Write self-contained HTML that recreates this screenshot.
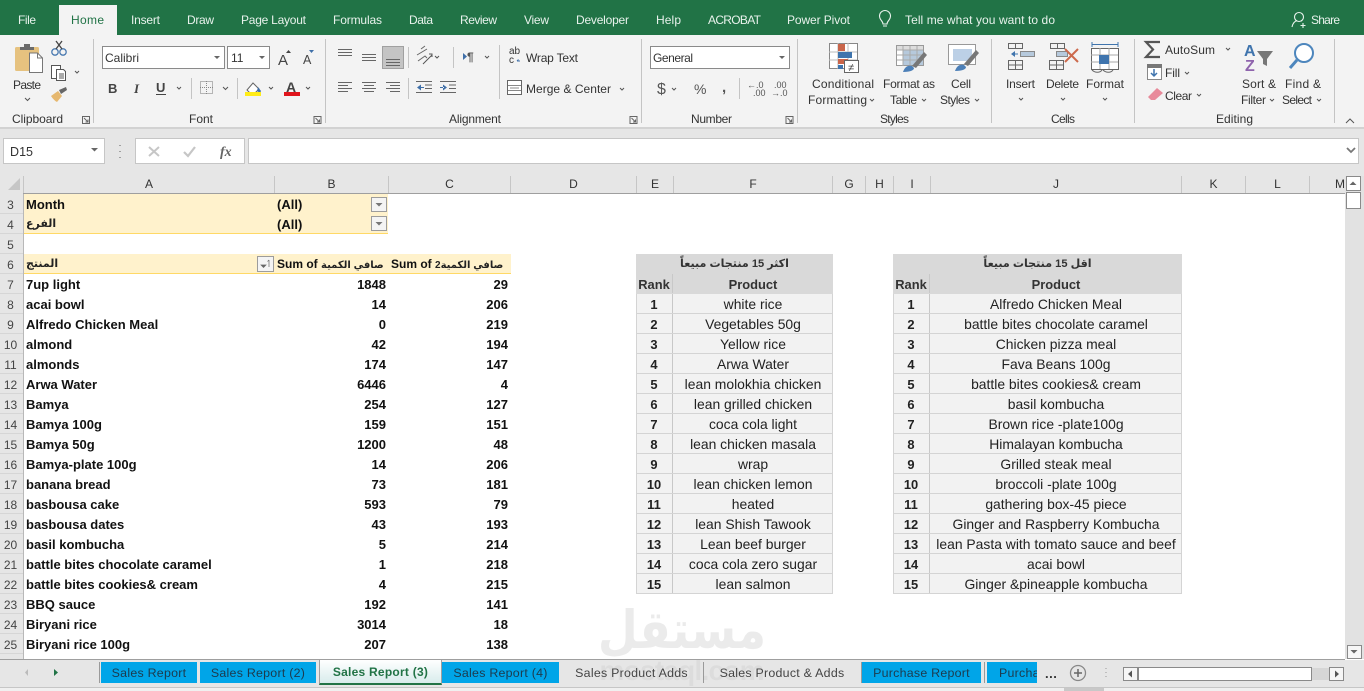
<!DOCTYPE html>
<html lang="en"><head><meta charset="utf-8"><title>Sales Report</title>
<style>
html,body{margin:0;padding:0;background:#fff}
#p{position:relative;width:1364px;height:691px;overflow:hidden;background:#fff;font-family:"Liberation Sans","DejaVu Sans",sans-serif}
svg{position:absolute;left:0;top:0}
svg text{font-family:"Liberation Sans","DejaVu Sans",sans-serif;font-size:12px;fill:#333}
.t text{fill:#e8f2ec;font-size:12px}
.a{position:absolute}
.ch{position:absolute;top:176px;height:17px;line-height:16px;text-align:center;font-size:12px;color:#333;border-right:1px solid #c6c6c6;box-sizing:border-box;overflow:hidden}
#rh{position:absolute;left:0;top:194px;width:24px;background:#e6e6e6;height:465px;border-right:1px solid #b8b8b8;box-sizing:border-box;overflow:hidden}
#rh div{height:20px;line-height:22px;font-size:12px;color:#444;text-align:center;box-sizing:border-box;border-bottom:1px solid #d6d6d6;padding-right:2px}
#pv{position:absolute;left:24px;top:194px;width:487px}
.r{position:relative;height:20px;line-height:21px;font-size:13px;font-weight:bold;color:#111;white-space:nowrap}
.r>span{position:absolute;top:0}
.r .n{left:2px}.r .b{right:125px}.r .c{right:3px}
.ar{font-size:10px;color:#222}
.y{background:#fff2cc}
.yb{box-shadow:inset 0 -1px 0 #ffd966}
.tb{position:absolute;top:254px;font-size:12.9px;color:#222;text-align:center}
.tb div{height:20px;line-height:21px;box-sizing:border-box;white-space:nowrap}
.tb .h{background:#d9d9d9;font-weight:bold;color:#333;font-size:11.1px}
.tb .row{display:flex;background:#f2f2f2;border-bottom:1px solid #d4d4d4;box-shadow:inset 1px 0 0 #d4d4d4,inset -1px 0 0 #d4d4d4}
.tb .hr{display:flex;background:#d9d9d9;font-weight:bold;color:#333}
.tb .rk{width:37px;border-right:1px solid #c8c8c8;flex:none;box-sizing:border-box}
.tb .row .rk{font-weight:bold}
.tb .row .pd{font-size:13.9px}
.tb .row div,.tb .hr div{height:19px}
.tb .pd{flex:1}
.s{position:absolute;top:662px;height:21px;line-height:22px;text-align:center;font-size:12.4px;letter-spacing:.25px;color:#1d3a4d;overflow:hidden;white-space:nowrap}
.bl{background:#00a5e8}
.sp{position:absolute;top:662px;width:1px;height:21px;background:#9a9a9a}
</style></head><body><div id="p">

<svg width="1364" height="691" viewBox="0 0 1364 691">
<rect width="1364" height="35" fill="#217346"/>
<rect y="35" width="1364" height="92" fill="#f3f3f3"/>
<rect y="127" width="1364" height="2" fill="#d2d2d2"/>
<rect y="129" width="1364" height="47" fill="#e6e6e6"/>
<rect x="59" y="5" width="58" height="31" fill="#f3f3f3"/>
<g class="t">
<text x="18" y="24" textLength="18">File</text>
<text x="71" y="24" textLength="33" style="fill:#217346">Home</text>
<text x="131" y="24" textLength="29">Insert</text>
<text x="187" y="24" textLength="27">Draw</text>
<text x="241" y="24" textLength="65">Page Layout</text>
<text x="333" y="24" textLength="49">Formulas</text>
<text x="409" y="24" textLength="24">Data</text>
<text x="460" y="24" textLength="37">Review</text>
<text x="524" y="24" textLength="25">View</text>
<text x="576" y="24" textLength="53">Developer</text>
<text x="656" y="24" textLength="25">Help</text>
<text x="708" y="24" textLength="53">ACROBAT</text>
<text x="787" y="24" textLength="63">Power Pivot</text>
<text x="905" y="24" textLength="150">Tell me what you want to do</text>
<text x="1311" y="24" textLength="29">Share</text>
</g>
<g fill="none" stroke="#e8f2ec" stroke-width="1.1">
<path d="M883 24c0-3-3.500-4-3.500-8a5.500 5.500 0 0 1 11 0c0 4-3.500 5-3.500 8zM883 26h4"/>
<circle cx="1299" cy="17" r="4.500"/><path d="M1292 27c1-5 3.500-6 5-6.500M1301 20.500l1 .5"/><path d="M1303 23v5M1300.500 25.500h5"/>
</g>
<g fill="#c4c4c4">
<rect x="93" y="39" width="1" height="84"/><rect x="325" y="39" width="1" height="84"/><rect x="641" y="39" width="1" height="84"/><rect x="797" y="39" width="1" height="84"/><rect x="991" y="39" width="1" height="84"/><rect x="1134" y="39" width="1" height="84"/><rect x="1334" y="39" width="1" height="84"/>
<rect x="191" y="78" width="1" height="21"/><rect x="237" y="78" width="1" height="21"/><rect x="408" y="47" width="1" height="21"/><rect x="408" y="78" width="1" height="21"/><rect x="453" y="47" width="1" height="21"/><rect x="499" y="45" width="1" height="54"/><rect x="739" y="78" width="1" height="21"/>
</g>
<rect x="15" y="47" width="24" height="24" rx="1.500" fill="#e6c27f"/>
<path d="M20 47h4v-3h6v3h4v3H20z" fill="#6b6b6b"/>
<path d="M29.500 53h8l5 5v14.500h-13z" fill="#fff" stroke="#777"/>
<path d="M37.500 53v5h5" fill="none" stroke="#777"/>
<text x="13" y="89" textLength="28">Paste</text>
<path d="M25 98l2.500 2.500 2.500-2.500M75 71l2 2 2-2M177 87l2 2 2-2M223 87l2.500 2.500 2.500-2.500" fill="none" stroke="#555"/>
<g fill="none" stroke-width="1.300"><circle cx="55" cy="52" r="3.200" stroke="#4a7ab0"/><circle cx="63" cy="52" r="3.200" stroke="#4a7ab0"/><path d="M56 49l6-8M62 49l-6-8" stroke="#444"/></g>
<g fill="#fff" stroke="#555"><path d="M51.500 65.500h9v13h-9z"/><path d="M56.500 69.500h7l2 2v9h-9z"/><path d="M59 74h5M59 76h5M59 78h5" fill="none"/></g>
<path d="M51 96l7-5 4 5-5 6c-2-1-4-3-6-6z" fill="#e6b86f"/><path d="M59 90l7-3 1 3-6 4z" fill="#666"/>
<text x="12" y="123" textLength="51">Clipboard</text>
<text x="189" y="123" textLength="24">Font</text>
<text x="449" y="123" textLength="52">Alignment</text>
<text x="691" y="123" textLength="41">Number</text>
<text x="880" y="123" textLength="29">Styles</text>
<text x="1051" y="123" textLength="24">Cells</text>
<text x="1216" y="123" textLength="37">Editing</text>
<g fill="none" stroke="#666"><path d="M82.500 116.500h7v7h-7zM84 118l4 4M88 119.500V122h-2.500"/><path d="M314 116.500h7v7h-7zM315.500 118l4 4M319.500 119.500V122H317"/><path d="M630 116.500h7v7h-7zM631.500 118l4 4M635.500 119.500V122H633"/><path d="M786 116.500h7v7h-7zM787.500 118l4 4M791.500 119.500V122H789"/><path d="M1346 123l4-4 4 4" stroke="#555"/></g>
<rect x="102.500" y="46.500" width="122" height="22" fill="#fff" stroke="#8a8a8a"/>
<rect x="227.500" y="46.500" width="42" height="22" fill="#fff" stroke="#8a8a8a"/>
<text x="105" y="62" textLength="34">Calibri</text><text x="231" y="62">11</text>
<path d="M214 56h6l-3 3zM259 56h6l-3 3z" fill="#666"/>
<text x="278" y="65" style="font-size:15px;fill:#444">A</text><text x="303" y="64" style="font-size:12.500px;fill:#444">A</text>
<path d="M286 53l2.500-3 2.500 3z" fill="#444"/><path d="M309 50h5l-2.500 3z" fill="#3f6fa8"/>
<text x="108" y="93" style="font-weight:bold;fill:#444;font-size:13px">B</text><text x="134" y="93" style="font-style:italic;font-family:'Liberation Serif';font-weight:bold;fill:#444;font-size:13px">I</text>
<text x="156" y="92" style="font-weight:bold;fill:#444;font-size:13px">U</text><rect x="156" y="94" width="10" height="1" fill="#444"/>
<rect x="200.500" y="81.500" width="12" height="12" fill="none" stroke="#777" stroke-dasharray="1 1"/><path d="M206.500 81v13M200 87.500h13" stroke="#888" stroke-dasharray="1 1"/>
<path d="M247 90l6-7 6 6-5 5h-3z" fill="#fff" stroke="#666"/><path d="M258 87l3 4-1 2-3-2z" fill="#3f6fa8"/><rect x="245" y="92" width="16" height="4" fill="#ffec17"/>
<path d="M269 87l2 2 2-2M306 87l2 2 2-2" fill="none" stroke="#555"/>
<text x="286" y="92" style="font-size:14px;fill:#444;font-weight:bold">A</text><rect x="284" y="92" width="16" height="4" fill="#e0141c"/>
<rect x="382.500" y="46.500" width="21" height="22" fill="#c4c4c4" stroke="#a0a0a0"/>
<g stroke="#666" fill="none">
<path d="M338 49.500h14M338 52.500h14M338 55.500h14"/><path d="M362 54.500h14M362 57.500h14M362 60.500h14"/><path d="M386 59.500h14M386 62.500h14M386 65.500h14"/>
<path d="M338 82.500h14M338 85.500h10M338 88.500h14M338 91.500h10"/><path d="M362 82.500h14M364 85.500h10M362 88.500h14M364 91.500h10"/><path d="M386 82.500h14M390 85.500h10M386 88.500h14M390 91.500h10"/>
<path d="M425 85h7M425 88.500h7M416 92.500h16M416 81.500h16"/><path d="M449 85h7M449 88.500h7M440 92.500h16M440 81.500h16"/>
<path d="M417 55l10-6M418 61l7-5 2 2M421 49l4-3"/><path d="M423 64l9-9M429 54h3v3" stroke="#555"/>
<path d="M435 56l2 2 2-2M485 56l2 2 2-2M620 88l2 2 2-2M672 88l2 2 2-2" stroke="#555"/>
</g>
<path d="M417 87.500l4-3v6zM421 87h3v1h-3z" fill="#3f6fa8"/><path d="M447 87.500l-4-3v6zM440 87h4v1h-4z" fill="#3f6fa8"/>
<path d="M463 53l4 3.500-4 3.500z" fill="#3f6fa8"/><text x="467" y="61" style="font-size:12px;fill:#555;font-weight:bold">¶</text>
<text x="509" y="54" style="font-size:10px">ab</text><text x="509" y="63" style="font-size:10px">c</text><path d="M517 61h3M517 61l1.500-1.500" stroke="#3f6fa8" fill="none"/>
<text x="526" y="62" textLength="52">Wrap Text</text>
<rect x="507.500" y="80.500" width="14" height="14" fill="#fff" stroke="#666"/><path d="M508 85.500h13M508 90.500h13M510 88h9" stroke="#888"/>
<text x="526" y="93" textLength="85">Merge &amp; Center</text>
<rect x="650.500" y="46.500" width="139" height="22" fill="#fff" stroke="#8a8a8a"/><text x="653" y="62" textLength="40">General</text>
<path d="M779 56h6l-3 3z" fill="#666"/>
<text x="657" y="94" style="font-size:16px;fill:#555">$</text>
<text x="694" y="94" style="font-size:14px;fill:#555">%</text><text x="722" y="92" style="font-size:15px;fill:#555;font-weight:bold">,</text>
<text x="747" y="88" style="font-size:9px;fill:#555">←.0</text><text x="753" y="96" style="font-size:9px;fill:#555">.00</text>
<text x="774" y="88" style="font-size:9px;fill:#555">.00</text><text x="771" y="96" style="font-size:9px;fill:#555">→.0</text>
<g>
<rect x="829.500" y="43.500" width="28" height="25" fill="#fff" stroke="#888"/>
<path d="M829 52h28M829 60h28M838 43v26M848 43v26" stroke="#bbb"/>
<rect x="838" y="44" width="7" height="7" fill="#c9654a"/><rect x="838" y="52" width="14" height="6" fill="#3f74ad"/><rect x="838" y="59" width="10" height="5" fill="#c9654a"/><rect x="838" y="65" width="5" height="4" fill="#3f74ad"/>
<rect x="844.500" y="60.500" width="14" height="12" fill="#fff" stroke="#666"/><text x="848" y="71" style="font-size:11px;fill:#444">≠</text>
</g>
<text x="812" y="88" textLength="62">Conditional</text><text x="808" y="104" textLength="59">Formatting</text><path d="M870 99l2 2 2-2" fill="none" stroke="#555"/>
<g>
<rect x="896.500" y="45.500" width="27" height="20" fill="#fff" stroke="#999"/><rect x="903" y="50" width="20" height="15" fill="#b6c9dc"/><rect x="897" y="46" width="26" height="4" fill="#ddd"/>
<path d="M897 50h26M897 55h26M897 60h26M903 46v20M910 46v20M917 46v20" stroke="#aaa"/>
<path d="M912 66l12-14 3 3-11 13z" fill="#777"/><path d="M903 72c2-6 6-7 9-6l2 2c0 2-3 4-11 4z" fill="#4d80b8"/>
<rect x="948.500" y="44.500" width="27" height="20" fill="#fff" stroke="#999"/><rect x="953" y="49" width="19" height="12" fill="#bcd0e6"/>
<path d="M964 64l12-14 3 3-11 13z" fill="#777"/><path d="M955 71c2-6 6-7 9-6l2 2c0 2-3 4-11 4z" fill="#4d80b8"/>
</g>
<text x="883" y="88" textLength="52">Format as</text><text x="890" y="104" textLength="27">Table</text><path d="M922 99l2 2 2-2" fill="none" stroke="#555"/>
<text x="951" y="88" textLength="20">Cell</text><text x="940" y="104" textLength="30">Styles</text><path d="M975 99l2 2 2-2" fill="none" stroke="#555"/>
<g fill="none" stroke="#666">
<path d="M1008.500 43.500h14v5h-14zM1015.500 43.500v5"/><path d="M1008.500 60.500h14v9h-14zM1008.500 65h14M1015.500 60.500v9"/>
<rect x="1020.500" y="51.500" width="14" height="5" fill="#b6c9dc" stroke="#888"/>
<path d="M1050.500 43.500h14v5h-14zM1057.500 43.500v5M1049.500 60.500h14v9h-14zM1049.500 65h14M1056.500 60.500v9"/>
<rect x="1056.500" y="51.500" width="11" height="5" fill="#b6c9dc" stroke="#888"/>
<path d="M1065 49l13 13M1078 49l-13 13" stroke="#cc6a4d" stroke-width="2"/>
<rect x="1091.500" y="48.500" width="27" height="21" fill="#fff"/><path d="M1091 55h27M1091 62h27M1100 48v21M1109 48v21" stroke="#aaa"/>
<rect x="1099" y="55" width="10" height="9" fill="#3f74ad" stroke="none"/>
<path d="M1092 44.500h26M1092 42v5M1118 42v5" stroke="#3f74ad"/>
<path d="M1092 70c3 3 8 3 10 0M1103 70c3 3 8 3 10 0"/>
</g>
<path d="M1011 54l4-3v6zM1014 53.500h4v1h-4z" fill="#3f74ad"/>
<text x="1006" y="88" textLength="29">Insert</text><text x="1046" y="88" textLength="33">Delete</text><text x="1086" y="88" textLength="38">Format</text>
<path d="M1019 98l2 2 2-2M1061 98l2 2 2-2M1103 98l2 2 2-2" fill="none" stroke="#555"/>
<path d="M1160 42h-14l7 7.500-7 7.500h14" fill="none" stroke="#555" stroke-width="2.200"/>
<text x="1165" y="54" textLength="50">AutoSum</text><path d="M1226 48l2 2 2-2M1185 72l2 2 2-2M1197 94l2 2 2-2" fill="none" stroke="#555"/>
<rect x="1147.500" y="65.500" width="14" height="14" fill="#fff" stroke="#888"/><rect x="1147" y="64" width="15" height="4" fill="#777"/><path d="M1154 69v7M1151 73l3 3 3-3" stroke="#3f74ad" stroke-width="1.500" fill="none"/>
<text x="1165" y="77" textLength="15">Fill</text>
<path d="M1148 97l9-9 6 5-8 7h-4z" fill="#e88a9a"/>
<text x="1165" y="100" textLength="27">Clear</text>
<text x="1244" y="56" style="font-size:16px;font-weight:bold;fill:#3f74ad">A</text><text x="1245" y="71" style="font-size:16px;font-weight:bold;fill:#8f64ad">Z</text>
<path d="M1257 51h16l-6 8v7l-4-2v-5z" fill="#777"/>
<circle cx="1304" cy="53" r="9" fill="#fff" stroke="#4d86bd" stroke-width="2"/><path d="M1297 60l-7 8" stroke="#4d86bd" stroke-width="3"/>
<text x="1242" y="88" textLength="34">Sort &amp;</text><text x="1241" y="104" textLength="25">Filter</text><text x="1285" y="88" textLength="36">Find &amp;</text><text x="1282" y="104" textLength="30">Select</text>
<path d="M1270 99l2 2 2-2M1317 99l2 2 2-2" fill="none" stroke="#555"/>

<rect x="3.500" y="138.500" width="101" height="25" fill="#fff" stroke="#c6c6c6"/>
<text x="10" y="156" textLength="23" style="font-size:12.500px">D15</text><path d="M91 148h7l-3.500 3.500z" fill="#666"/>
<path d="M120 145v1M120 151v1M120 157v1" stroke="#888" stroke-width="1.500"/>
<rect x="135.500" y="138.500" width="109" height="25" fill="#fff" stroke="#c6c6c6"/>
<path d="M149 147l10 9M159 147l-10 9" stroke="#c6c6c6" stroke-width="2"/>
<path d="M184 152l4 4 7-9" fill="none" stroke="#c6c6c6" stroke-width="2.200"/>
<text x="220" y="156" style="font-family:'Liberation Serif';font-style:italic;font-size:14px;font-weight:bold;fill:#666">fx</text>
<rect x="248.500" y="138.500" width="1110" height="25" fill="#fff" stroke="#c6c6c6"/>
<path d="M1347 148l4 4 4-4" fill="none" stroke="#777" stroke-width="1.800"/>
<rect x="0" y="176" width="1364" height="18" fill="#e6e6e6"/>
<path d="M8 190L20 178V190z" fill="#c6c6c6"/>
<rect x="23" y="193" width="1322" height="1" fill="#9f9f9f"/>
</svg>

<div class="ch" style="left:0;width:24px"></div>
<div class="ch" style="left:24px;width:251px">A</div>
<div class="ch" style="left:275px;width:114px">B</div>
<div class="ch" style="left:389px;width:122px">C</div>
<div class="ch" style="left:511px;width:126px">D</div>
<div class="ch" style="left:637px;width:37px">E</div>
<div class="ch" style="left:674px;width:159px">F</div>
<div class="ch" style="left:833px;width:33px">G</div>
<div class="ch" style="left:866px;width:28px">H</div>
<div class="ch" style="left:894px;width:37px">I</div>
<div class="ch" style="left:931px;width:251px">J</div>
<div class="ch" style="left:1182px;width:64px">K</div>
<div class="ch" style="left:1246px;width:64px">L</div>
<div class="ch" style="left:1310px;width:35px;border:0;text-align:right">M</div>

<div id="rh"><div>3</div><div>4</div><div>5</div><div>6</div><div>7</div><div>8</div><div>9</div><div>10</div><div>11</div><div>12</div><div>13</div><div>14</div><div>15</div><div>16</div><div>17</div><div>18</div><div>19</div><div>20</div><div>21</div><div>22</div><div>23</div><div>24</div><div>25</div></div>

<div id="pv">
<div class="r" style="width:364px;background:#fff2cc"><span class="n">Month</span><span style="left:253px">(All)</span></div>
<div class="r yb" style="width:364px;background:#fff2cc"><span class="n ar" style="font-size:11px">الفرع</span><span style="left:253px">(All)</span></div>
<div class="r"></div>
<div class="r y yb" style="font-size:12px"><span class="n ar" style="font-size:11px">المنتج</span><span style="left:253px">Sum of <b class="ar">صافي الكمية</b></span><span style="left:367px">Sum of <b class="ar">صافي الكمية2</b></span></div>
<div class="r"><span class="n">7up light</span><span class="b">1848</span><span class="c">29</span></div>
<div class="r"><span class="n">acai bowl</span><span class="b">14</span><span class="c">206</span></div>
<div class="r"><span class="n">Alfredo Chicken Meal</span><span class="b">0</span><span class="c">219</span></div>
<div class="r"><span class="n">almond</span><span class="b">42</span><span class="c">194</span></div>
<div class="r"><span class="n">almonds</span><span class="b">174</span><span class="c">147</span></div>
<div class="r"><span class="n">Arwa Water</span><span class="b">6446</span><span class="c">4</span></div>
<div class="r"><span class="n">Bamya</span><span class="b">254</span><span class="c">127</span></div>
<div class="r"><span class="n">Bamya 100g</span><span class="b">159</span><span class="c">151</span></div>
<div class="r"><span class="n">Bamya 50g</span><span class="b">1200</span><span class="c">48</span></div>
<div class="r"><span class="n">Bamya-plate 100g</span><span class="b">14</span><span class="c">206</span></div>
<div class="r"><span class="n">banana bread</span><span class="b">73</span><span class="c">181</span></div>
<div class="r"><span class="n">basbousa cake</span><span class="b">593</span><span class="c">79</span></div>
<div class="r"><span class="n">basbousa dates</span><span class="b">43</span><span class="c">193</span></div>
<div class="r"><span class="n">basil kombucha</span><span class="b">5</span><span class="c">214</span></div>
<div class="r"><span class="n">battle bites chocolate caramel</span><span class="b">1</span><span class="c">218</span></div>
<div class="r"><span class="n">battle bites cookies&amp; cream</span><span class="b">4</span><span class="c">215</span></div>
<div class="r"><span class="n">BBQ sauce</span><span class="b">192</span><span class="c">141</span></div>
<div class="r"><span class="n">Biryani rice</span><span class="b">3014</span><span class="c">18</span></div>
<div class="r"><span class="n">Biryani rice 100g</span><span class="b">207</span><span class="c">138</span></div>
</div>

<svg width="1364" height="691" style="pointer-events:none">
<g fill="#f4f4f4" stroke="#9c9c9c"><rect x="371.500" y="197.500" width="15" height="14"/><rect x="371.500" y="216.500" width="15" height="14"/><rect x="257.500" y="256.500" width="16" height="15"/></g>
<path d="M375.500 203h7l-3.500 3.500zM375.500 222h7l-3.500 3.500z" fill="#777"/>
<path d="M261 265h5l-2.500 2.500zM269 260v7M269 260l-1.500 1.500" fill="#666" stroke="#666" stroke-width=".7"/>
</svg>

<div class="tb" style="left:636px;width:197px">
<div class="h">اكثر 15 منتجات مبيعاً</div>
<div class="hr" style="height:20px"><div class="rk">Rank</div><div class="pd">Product</div></div>
<div class="row"><div class="rk">1</div><div class="pd">white rice</div></div>
<div class="row"><div class="rk">2</div><div class="pd">Vegetables 50g</div></div>
<div class="row"><div class="rk">3</div><div class="pd">Yellow rice</div></div>
<div class="row"><div class="rk">4</div><div class="pd">Arwa Water</div></div>
<div class="row"><div class="rk">5</div><div class="pd">lean molokhia chicken</div></div>
<div class="row"><div class="rk">6</div><div class="pd">lean grilled chicken</div></div>
<div class="row"><div class="rk">7</div><div class="pd">coca cola light</div></div>
<div class="row"><div class="rk">8</div><div class="pd">lean chicken masala</div></div>
<div class="row"><div class="rk">9</div><div class="pd">wrap</div></div>
<div class="row"><div class="rk">10</div><div class="pd">lean chicken lemon</div></div>
<div class="row"><div class="rk">11</div><div class="pd">heated</div></div>
<div class="row"><div class="rk">12</div><div class="pd">lean Shish Tawook</div></div>
<div class="row"><div class="rk">13</div><div class="pd">Lean beef burger</div></div>
<div class="row"><div class="rk">14</div><div class="pd">coca cola zero sugar</div></div>
<div class="row"><div class="rk">15</div><div class="pd">lean salmon</div></div>
</div>

<div class="tb" style="left:893px;width:289px">
<div class="h">اقل 15 منتجات مبيعاً</div>
<div class="hr" style="height:20px"><div class="rk">Rank</div><div class="pd">Product</div></div>
<div class="row"><div class="rk">1</div><div class="pd">Alfredo Chicken Meal</div></div>
<div class="row"><div class="rk">2</div><div class="pd">battle bites chocolate caramel</div></div>
<div class="row"><div class="rk">3</div><div class="pd">Chicken pizza meal</div></div>
<div class="row"><div class="rk">4</div><div class="pd">Fava Beans 100g</div></div>
<div class="row"><div class="rk">5</div><div class="pd">battle bites cookies&amp; cream</div></div>
<div class="row"><div class="rk">6</div><div class="pd">basil kombucha</div></div>
<div class="row"><div class="rk">7</div><div class="pd">Brown rice -plate100g</div></div>
<div class="row"><div class="rk">8</div><div class="pd">Himalayan kombucha</div></div>
<div class="row"><div class="rk">9</div><div class="pd">Grilled steak meal</div></div>
<div class="row"><div class="rk">10</div><div class="pd">broccoli -plate 100g</div></div>
<div class="row"><div class="rk">11</div><div class="pd">gathering box-45 piece</div></div>
<div class="row"><div class="rk">12</div><div class="pd">Ginger and Raspberry Kombucha</div></div>
<div class="row"><div class="rk">13</div><div class="pd">lean Pasta with tomato sauce and beef</div></div>
<div class="row"><div class="rk">14</div><div class="pd">acai bowl</div></div>
<div class="row"><div class="rk">15</div><div class="pd">Ginger &amp;pineapple kombucha</div></div>
</div>

<div class="a" style="left:1345px;top:176px;width:19px;height:483px;background:#e2e2e2"></div>
<div class="a" style="left:1346px;top:176px;width:13px;height:13px;background:#fff;border:1px solid #8a8a8a"></div>
<div class="a" style="left:1346px;top:192px;width:13px;height:15px;background:#fff;border:1px solid #8a8a8a"></div>
<div class="a" style="left:1347px;top:645px;width:13px;height:12px;background:#f6f6f6;border:1px solid #8a8a8a"></div>

<div class="a" style="left:0;top:659px;width:1345px;height:1px;background:#9f9f9f"></div>
<div class="a" style="left:0;top:660px;width:1364px;height:27px;background:#e6e6e6"></div>
<div class="a" style="left:0;top:687px;width:1364px;height:1px;background:#c6c6c6"></div>
<div class="a" style="left:0;top:688px;width:1364px;height:3px;background:#f0f0f0"></div>
<div class="a" style="left:1064px;top:688px;width:40px;height:3px;background:#c8c8c8"></div>

<div class="sp" style="left:99px"></div>
<div class="s bl" style="left:101px;width:96px">Sales Report</div>
<div class="s bl" style="left:200px;width:116px">Sales Report (2)</div>
<div class="s" style="left:319px;width:121px;top:660px;height:23px;line-height:25px;background:linear-gradient(#fff,#d8ecec);color:#217346;font-weight:bold;font-size:12px;border-bottom:2px solid #217346;border-left:1px solid #9f9f9f;border-right:1px solid #9f9f9f">Sales Report (3)</div>
<div class="s bl" style="left:442px;width:117px">Sales Report (4)</div>
<div class="s" style="left:561px;width:141px;color:#444">Sales Product Adds</div>
<div class="sp" style="left:703px"></div>
<div class="s" style="left:704px;width:156px;color:#444">Sales Product &amp; Adds</div>
<div class="sp" style="left:861px"></div>
<div class="s bl" style="left:862px;width:119px">Purchase Report</div>
<div class="sp" style="left:984px"></div>
<div class="s bl" style="left:987px;width:50px;text-align:left"><span style="margin-left:12px">Purchase</span></div>

<svg width="1364" height="691" style="pointer-events:none">
<path d="M28 669v7l-3-3.500z" fill="#bbb"/><path d="M54 669v7l4-3.500z" fill="#217346"/>
<text x="1045" y="678" style="font-size:13px;fill:#333;font-weight:bold;letter-spacing:.5px">...</text>
<circle cx="1078" cy="673" r="7.500" fill="none" stroke="#888" stroke-width="1.300"/><path d="M1078 669v8M1074 673h8" stroke="#666" stroke-width="1.500"/>
<path d="M1106 668v1M1106 672v1M1106 676v1" stroke="#aaa" stroke-width="1.300"/>
<rect x="1123.500" y="667.500" width="14" height="13" fill="#f6f6f6" stroke="#8a8a8a"/>
<rect x="1138.500" y="667.500" width="173" height="13" fill="#fff" stroke="#8a8a8a"/>
<rect x="1312" y="668" width="17" height="12" fill="#d6d6d6"/>
<rect x="1329.500" y="667.500" width="14" height="13" fill="#f6f6f6" stroke="#8a8a8a"/>
<path d="M1132 670.500v7l-4-3.500zM1335 670.500v7l4-3.500z" fill="#555"/>
<path d="M1349.500 185l3.500-3.500 3.500 3.500zM1350.500 650h7l-3.500 3.500z" fill="#666"/>
<text transform="translate(682,648) scale(1,1.15)" text-anchor="middle" style="font-family:'DejaVu Sans',sans-serif;font-size:46px;font-weight:bold;fill:#777;opacity:.14">مستقل</text>
<text x="682" y="680" text-anchor="middle" textLength="165" style="font-family:'Liberation Sans',sans-serif;font-size:28px;font-weight:bold;fill:#777;opacity:.08">mostaql.com</text>
</svg>

</div></body></html>
